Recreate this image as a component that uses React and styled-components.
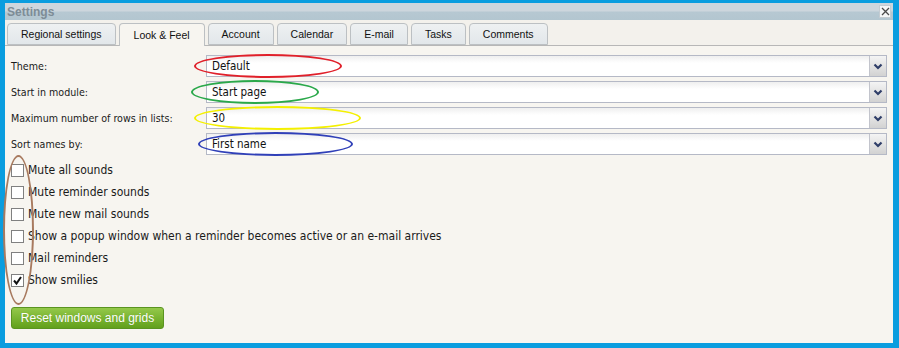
import React from "react";
import styled, { createGlobalStyle } from "styled-components";

const GlobalStyle = createGlobalStyle`
  body {
    margin: 0;
    background: #0a9ddf;
  }
`;

const tabs = [
  "Regional settings",
  "Look & Feel",
  "Account",
  "Calendar",
  "E-mail",
  "Tasks",
  "Comments",
];

// annotation ellipses drawn over the selects
const rows = [
  { label: "Theme:", value: "Default", ring: { color: "#e0202a", left: -13, width: 148 } },
  { label: "Start in module:", value: "Start page", ring: { color: "#2aa84a", left: -16, width: 128 } },
  { label: "Maximum number of rows in lists:", value: "30", ring: { color: "#f4f000", left: -13, width: 167 } },
  { label: "Sort names by:", value: "First name", ring: { color: "#3040b8", left: -9, width: 155 } },
];

const options = [
  { text: "Mute all sounds", checked: false },
  { text: "Mute reminder sounds", checked: false },
  { text: "Mute new mail sounds", checked: false },
  { text: "Show a popup window when a reminder becomes active or an e-mail arrives", checked: false },
  { text: "Mail reminders", checked: false },
  { text: "Show smilies", checked: true },
];

const tahomaLike = `"DejaVu Sans Condensed", "DejaVu Sans", sans-serif`;

const App = () => {
  return (
    <Frame>
      <GlobalStyle />
      <Window>
        <TitleBar>
          <Title>Settings</Title>
          <CloseButton>
            <svg width="9" height="9" viewBox="0 0 9 9">
              <path d="M1 1 L8 8 M8 1 L1 8" stroke="#4a4a4a" strokeWidth="1.3" />
            </svg>
          </CloseButton>
        </TitleBar>

        <TabBar>
          {tabs.map((t) => (
            <Tab key={t} active={t === "Look & Feel"}>
              {t}
            </Tab>
          ))}
        </TabBar>

        <Content>
          <Form>
            {rows.map((r) => (
              <Row key={r.label}>
                <Label>{r.label}</Label>
                <Select>
                  <SelectValue>{r.value}</SelectValue>
                  <Ring color={r.ring.color} style={{ left: r.ring.left, width: r.ring.width }} />
                  <DropButton>
                    <svg width="10" height="7" viewBox="0 0 10 7">
                      <path d="M1.5 1.5 L5 5 L8.5 1.5" stroke="#2f3e68" strokeWidth="2.2" fill="none" />
                    </svg>
                  </DropButton>
                </Select>
              </Row>
            ))}
          </Form>

          <Checks>
            <ColumnRing />
            {options.map((o) => (
              <CheckRow key={o.text}>
                <Box>
                  {o.checked && (
                    <svg width="11" height="11" viewBox="0 0 11 11">
                      <path d="M2 5.5 L4.5 8.5 L9 2" stroke="#111" strokeWidth="2" fill="none" />
                    </svg>
                  )}
                </Box>
                <CheckText>{o.text}</CheckText>
              </CheckRow>
            ))}
          </Checks>

          <ResetButton>Reset windows and grids</ResetButton>
        </Content>
      </Window>
    </Frame>
  );
};

const Frame = styled.div`
  width: 899px;
  height: 348px;
  box-sizing: border-box;
  padding: 3px 6px 5px 5px;
  background: #0a9ddf;
`;

const Window = styled.div`
  height: 100%;
  display: flex;
  flex-direction: column;
  background: #f7f5f0;
  font-family: "Liberation Sans", Arial, sans-serif;
`;

const TitleBar = styled.div`
  height: 17px;
  flex-shrink: 0;
  display: flex;
  align-items: center;
  justify-content: space-between;
  padding: 0 2px;
  background: linear-gradient(#cdd6dd 0%, #cdd6dd 45%, #b6c8d2 55%, #b3c6d0 100%);
`;

const Title = styled.span`
  font-size: 12px;
  font-weight: bold;
  color: #7d8c96;
`;

const CloseButton = styled.div`
  width: 12px;
  height: 13px;
  box-sizing: border-box;
  border: 1px solid #c4ccd2;
  background: #f4f6f7;
  display: flex;
  align-items: center;
  justify-content: center;
`;

const TabBar = styled.div`
  height: 26px;
  flex-shrink: 0;
  box-sizing: border-box;
  display: flex;
  align-items: flex-end;
  gap: 3px;
  padding-left: 2px;
  background: #f3f1ec;
  border-bottom: 1px solid #b7b7b7;
`;

const Tab = styled.div`
  height: ${(p) => (p.active ? "23px" : "22px")};
  box-sizing: border-box;
  margin-bottom: ${(p) => (p.active ? "-1px" : "0")};
  padding: 0 ${(p) => (p.active ? "14px" : "13px")};
  display: flex;
  align-items: center;
  font-size: 10.5px;
  color: #111;
  border: 1px solid #bcc0c3;
  border-bottom: ${(p) => (p.active ? "none" : "1px solid #bcc0c3")};
  border-radius: 4px 4px 0 0;
  background: ${(p) => (p.active ? "#f7f5f0" : "linear-gradient(#eef1f2, #e2e7ea)")};
`;

const Content = styled.div`
  padding: 9px 6px 0 6px;
  display: flex;
  flex-direction: column;
`;

const Form = styled.div`
  display: flex;
  flex-direction: column;
  gap: 4px;
`;

const Row = styled.div`
  display: grid;
  grid-template-columns: 195px 1fr;
  align-items: center;
  height: 22px;
`;

const Label = styled.span`
  font-family: ${tahomaLike};
  font-size: 10.6px;
  color: #1a1a1a;
  white-space: nowrap;
`;

const Select = styled.div`
  position: relative;
  height: 22px;
  box-sizing: border-box;
  border: 1px solid #b5b9c6;
  background: linear-gradient(#efefef 0%, #fff 35%, #fff 100%);
  display: flex;
  align-items: center;
`;

const SelectValue = styled.span`
  padding-left: 5px;
  font-family: ${tahomaLike};
  font-size: 11.5px;
  color: #111;
  flex: 1;
`;

const Ring = styled.div`
  position: absolute;
  top: -2px;
  height: 24px;
  box-sizing: border-box;
  border: 2px solid ${(p) => p.color};
  border-radius: 50%;
  pointer-events: none;
`;

const DropButton = styled.div`
  width: 17px;
  height: 20px;
  box-sizing: border-box;
  border-left: 1px solid #c2c4cc;
  background: linear-gradient(#f4f4f4, #d2d2d2);
  display: flex;
  align-items: center;
  justify-content: center;
`;

const Checks = styled.div`
  position: relative;
  margin-top: 4px;
  display: flex;
  flex-direction: column;
`;

const ColumnRing = styled.div`
  position: absolute;
  left: -8px;
  top: -4px;
  width: 31px;
  height: 150px;
  box-sizing: border-box;
  border: 2px solid #a87a5f;
  border-radius: 50%;
  pointer-events: none;
`;

const CheckRow = styled.div`
  height: 22px;
  display: flex;
  align-items: center;
  gap: 4px;
`;

const Box = styled.div`
  width: 13px;
  height: 13px;
  box-sizing: border-box;
  border: 1px solid #808080;
  background: #fff;
  display: flex;
  align-items: center;
  justify-content: center;
`;

const CheckText = styled.span`
  font-family: ${tahomaLike};
  font-size: 12px;
  color: #1a1a1a;
  white-space: nowrap;
`;

const ResetButton = styled.button`
  margin-top: 16px;
  align-self: flex-start;
  width: 153px;
  height: 22px;
  border: 1px solid #5a9420;
  border-radius: 3px;
  background: linear-gradient(#94c84a 0%, #7ab532 50%, #62a01c 100%);
  color: #fff;
  font-family: "Liberation Sans", Arial, sans-serif;
  font-size: 12px;
  padding: 0;
  text-shadow: 0 0 1px rgba(0, 0, 0, 0.15);
`;

export default App;
